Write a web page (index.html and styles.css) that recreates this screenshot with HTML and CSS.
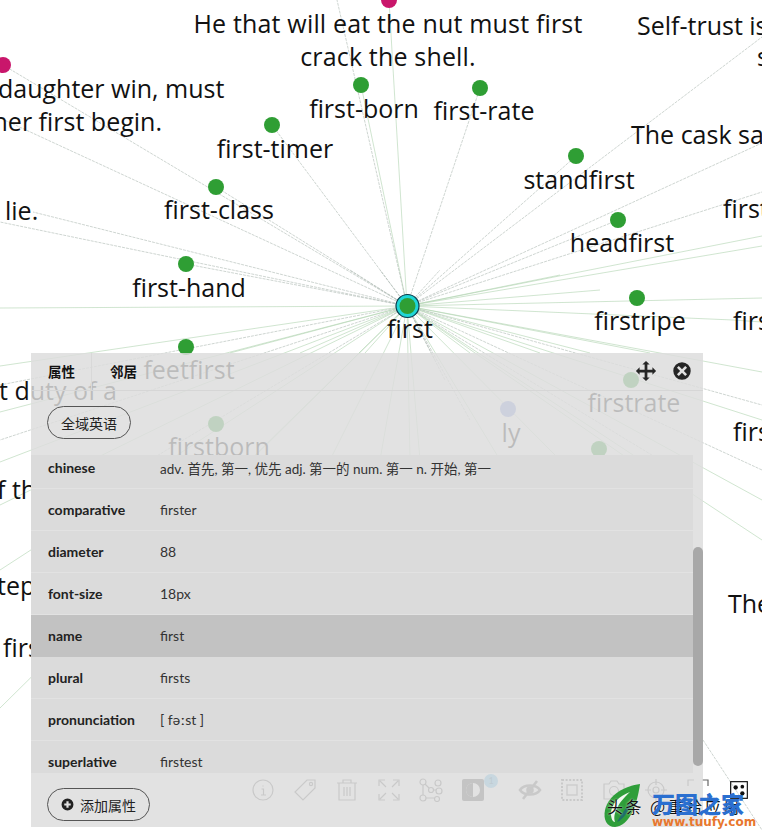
FILE: index.html
```html
<!DOCTYPE html>
<html lang="zh">
<head>
<meta charset="utf-8">
<title>first</title>
<link rel="stylesheet" href="styles.css">
</head>
<body>
<main class="stage">
  <svg class="graph" width="762" height="833" viewBox="0 0 762 833">
    <path class="edge edge-green" d="M407 306L0 308M407 306L0 366M407 306L0 412M407 306L0 462M407 306L0 505M407 306L0 570M407 306L0 708M407 306L361 85M407 306L389 0M407 306L762 298M407 306L762 236M407 306L762 246M407 306L733 320M733 320L762 322M407 306L762 372M407 306L762 420M407 306L762 500M407 306L762 540M407 306L410 460M407 306L420 460M407 306L380 460M407 306L330 460M407 306L250 460M407 306L500 460M407 306L560 460M407 306L630 460M407 306L590 353M407 306L650 353M407 306L540 353M407 306L300 353M407 306L230 353M407 306L470 353M407 306L365 353M407 306L600 290M407 306L560 275"/>
    <path class="edge edge-grey" d="M407 306L3 65M407 306L0 118M407 306L33 212M407 306L0 222M407 306L186 264M407 306L216 187M407 306L272 125M407 306L480 88M407 306L337 0M407 306L762 37M407 306L576 156M407 306L762 143M407 306L618 220M407 306L762 192M407 306L762 405M407 306L762 470M407 306L435 360M407 306L445 380M407 306L470 420M407 306L0 385M407 306L0 440M407 306L150 460M407 306L660 460M703 740L762 830M407 306L380 270M407 306L440 270M407 306L350 270"/>
    <circle class="node" cx="361" cy="85" r="8"/>
    <circle class="node" cx="480" cy="88" r="8"/>
    <circle class="node" cx="272" cy="125" r="8"/>
    <circle class="node" cx="216" cy="187" r="8"/>
    <circle class="node" cx="186" cy="264" r="8"/>
    <circle class="node" cx="576" cy="156" r="8"/>
    <circle class="node" cx="618" cy="220" r="8"/>
    <circle class="node" cx="637" cy="298" r="8"/>
    <circle class="node" cx="186" cy="347" r="8"/>
    <circle class="node" cx="216" cy="424" r="8"/>
    <circle class="node" cx="631" cy="380" r="8"/>
    <circle class="node" cx="599" cy="449" r="8"/>
    <circle class="node node-blue" cx="508" cy="409" r="8"/>
    <circle class="node node-pink" cx="3" cy="65" r="8"/>
    <circle class="node node-pink" cx="389" cy="0" r="8"/>
    <circle class="focus-ring" cx="407.500" cy="306" r="11.500"/>
    <circle class="node" cx="407.500" cy="306" r="8"/>

    <text class="label mid label-long" x="388" y="33">He that will eat the nut must first</text>
    <text class="label mid label-long" x="388" y="66">crack the shell.</text>
    <text class="label" x="-2" y="98">daughter win, must</text>
    <text class="label end" x="162" y="131">her first begin.</text>
    <text class="label" x="5" y="220">lie.</text>
    <text class="label mid" x="364" y="118">first-born</text>
    <text class="label mid" x="484" y="120">first-rate</text>
    <text class="label mid" x="275" y="158">first-timer</text>
    <text class="label mid" x="219" y="219">first-class</text>
    <text class="label mid" x="189" y="297">first-hand</text>
    <text class="label mid" x="579" y="189">standfirst</text>
    <text class="label mid" x="622" y="252">headfirst</text>
    <text class="label mid" x="640" y="330">firstripe</text>
    <text class="label mid" x="410" y="338">first</text>
    <text class="label" x="637" y="35">Self-trust is</text>
    <text class="label" x="757" y="66">s</text>
    <text class="label" x="631" y="144">The cask sa</text>
    <text class="label" x="723" y="218">first</text>
    <text class="label" x="733" y="330">firs</text>
    <text class="label" x="733" y="441">firs</text>
    <text class="label" x="728" y="613">The</text>
    <text class="label" x="-1" y="400">t duty of a</text>
    <text class="label" x="-3" y="499">f th</text>
    <text class="label" x="-3" y="595">tep</text>
    <text class="label" x="3" y="657">firs</text>
    <text class="label mid" x="189" y="379">feetfirst</text>
    <text class="label mid" x="219" y="456">firstborn</text>
    <text class="label mid" x="634" y="412">firstrate</text>
    <text class="label mid" x="511" y="442">ly</text>
  </svg>

  <nav class="toolbar">
    <svg class="tool" viewBox="0 0 24 24"><circle cx="12" cy="12" r="10"/><path d="M12 7.500v1M10.500 11H12.500V17M10 17H15"/></svg>
    <svg class="tool" viewBox="0 0 24 24"><path d="M14 2H22V10L10 22L2 14Z"/><circle cx="18" cy="6" r="1.600"/></svg>
    <svg class="tool" viewBox="0 0 24 24"><path d="M2 5H22M8 5V2H16V5M4 5V22H20V5M9 9V18M12 9V18M15 9V18"/></svg>
    <svg class="tool" viewBox="0 0 24 24"><path d="M2 8V2H8M16 2H22V8M22 16V22H16M8 22H2V16M3 3L9 9M21 3L15 9M21 21L15 15M3 21L9 15"/></svg>
    <svg class="tool" viewBox="0 0 24 24"><circle cx="4" cy="4" r="3"/><circle cx="19" cy="5" r="3"/><circle cx="12" cy="12" r="2.500"/><circle cx="20" cy="13" r="3"/><circle cx="4" cy="20" r="3"/><circle cx="18" cy="21" r="2.500"/><path d="M6 6L10 10M7 20H15M4 7V17M14 12H17"/></svg>
    <div class="tool-badged">
      <svg class="tool" viewBox="0 0 24 24"><rect class="solid" x="1" y="1" width="22" height="22" rx="2"/><circle class="hole" cx="12" cy="12" r="7"/><path class="solid" d="M12 5A7 7 0 0 0 12 19Z"/></svg>
      <span class="badge">1</span>
    </div>
    <svg class="tool tool-heavy" viewBox="0 0 24 24"><path d="M2 12C6 6 18 6 22 12C18 18 6 18 2 12ZM19 3L5 21"/><circle cx="12" cy="12" r="2.500"/></svg>
    <svg class="tool tool-dotted" viewBox="0 0 24 24"><path d="M2 2H22V22H2Z"/><rect class="plain" x="7" y="7" width="10" height="10"/></svg>
    <svg class="tool" viewBox="0 0 24 24"><path d="M2 6H7L9 3H15L17 6H22V21H2Z"/><circle cx="12" cy="13" r="4.500"/></svg>
    <svg class="tool" viewBox="0 0 24 24"><circle cx="12" cy="12" r="8"/><circle cx="12" cy="12" r="3"/><path d="M12 1V7M12 17V23M1 12H7M17 12H23"/></svg>
    <svg class="tool" viewBox="0 0 24 24"><path d="M2 8V2H8M16 2H22V8M22 16V22H16M8 22H2V16"/></svg>
    <svg class="tool tool-qr" viewBox="0 0 24 24"><rect class="plain" x="2" y="2" width="20" height="20"/><circle class="dot" cx="8" cy="9" r="2.600"/><circle class="dot" cx="16" cy="8" r="2.200"/><circle class="dot" cx="16" cy="16" r="2.600"/></svg>
  </nav>

  <section class="panel">
    <header class="panel-tabs">
      <span class="tab">属性</span>
      <span class="tab tab-next">邻居</span>
      <div class="panel-actions">
        <svg class="action" viewBox="0 0 24 24"><path d="M12 1L16 5H13.500V10.500H19V8L23 12L19 16V13.500H13.500V19H16L12 23L8 19H10.500V13.500H5V16L1 12L5 8V10.500H10.500V5H8Z"/></svg>
        <svg class="action" viewBox="0 0 24 24"><path fill-rule="evenodd" d="M12 2.500A9.500 9.500 0 1 0 12 21.500A9.500 9.500 0 1 0 12 2.500ZM8.500 6.500L12 10L15.500 6.500L17.500 8.500L14 12L17.500 15.500L15.500 17.500L12 14L8.500 17.500L6.500 15.500L10 12L6.500 8.500Z"/></svg>
      </div>
    </header>
    <div class="panel-label-row"><button class="pill">全域英语</button></div>
    <div class="panel-body">
      <div class="rows">
        <div class="row"><span class="key">chinese</span><span class="val val-long">adv. 首先, 第一, 优先 adj. 第一的 num. 第一 n. 开始, 第一</span></div>
        <div class="row"><span class="key">comparative</span><span class="val">firster</span></div>
        <div class="row"><span class="key">diameter</span><span class="val">88</span></div>
        <div class="row"><span class="key">font-size</span><span class="val">18px</span></div>
        <div class="row row-active"><span class="key">name</span><span class="val">first</span></div>
        <div class="row"><span class="key">plural</span><span class="val">firsts</span></div>
        <div class="row"><span class="key">pronunciation</span><span class="val">[ fəːst ]</span></div>
        <div class="row"><span class="key">superlative</span><span class="val">firstest</span></div>
      </div>
      <div class="scroll-track"><div class="scroll-thumb"></div></div>
    </div>
    <footer class="panel-foot">
      <button class="pill pill-add">
        <svg class="plus" viewBox="0 0 24 24"><path fill-rule="evenodd" d="M12 1A11 11 0 1 0 12 23A11 11 0 1 0 12 1ZM10 6H14V10H18V14H14V18H10V14H6V10H10Z"/></svg>
        添加属性
      </button>
    </footer>
  </section>

  <aside class="watermark">
    <svg class="wm-leaf" viewBox="0 0 38 44"><path class="leaf-green" d="M37 0C22 2 6 10 2 26C0 36 4 43 12 43C26 42 34 22 37 0Z"/><path class="leaf-white" d="M27 8C16 12 8 20 8 30C8 35 10 38 12 38C9 28 18 16 27 8Z"/><path class="leaf-teal" d="M14 38C20 36 27 26 30 14C25 22 18 30 14 38Z"/></svg>
    <span class="wm-under">头条 @重拾应用</span>
    <div class="wm-text">
      <strong class="wm-name">万图之家</strong>
      <span class="wm-url">www.tuufy.com</span>
    </div>
  </aside>
</main>
</body>
</html>
```
FILE: styles.css
```css
* { box-sizing: border-box; }
html, body { margin: 0; padding: 0; background: #fff; }
.stage { position: relative; width: 762px; height: 833px; overflow: hidden; background: #fff; }
.graph { position: absolute; left: 0; top: 0; display: block; }
.edge { fill: none; stroke-width: .6; }
.edge-green { stroke: #b0d4b0; }
.edge-grey { stroke: #adb9b1; stroke-dasharray: 3 1; }
.node { fill: #2f9e34; }
.node-blue { fill: #7f93e0; }
.node-pink { fill: #c9166b; }
.focus-ring { fill: #1fd6d6; stroke: #0c3a4a; stroke-width: 1.2; }
.label { font-family: "Open Sans", sans-serif; font-size: 25px; fill: #111; }
.label-long { letter-spacing: .17px; }
.mid { text-anchor: middle; }
.end { text-anchor: end; }

.toolbar { position: absolute; left: 251px; top: 778px; display: flex; gap: 18px; }
.tool { display: block; width: 24px; height: 24px; fill: none; stroke: #666; stroke-width: 1.2; }
.tool-heavy { stroke-width: 2.6; }
.tool-dotted path { stroke-dasharray: 2 1.6; stroke-width: 2; }
.tool-badged { position: relative; width: 24px; height: 24px; margin-right: 15px; }
.solid { fill: #444; stroke: none; }
.hole { fill: #fff; stroke: none; }
.plain { stroke: #777; stroke-width: 1.4; fill: none; }
.tool-qr { width: 20px; height: 20px; margin: 2px 0 0 1px; stroke: #111; }
.tool-qr .plain { stroke: #111; }
.dot { fill: #111; stroke: none; }
.badge { position: absolute; left: 23px; top: -4px; width: 14px; height: 14px; border-radius: 50%; background: #5cb8e8; color: #2a6f95; font: 9px/14px Lato, sans-serif; text-align: center; }

.panel { position: absolute; left: 31px; top: 353px; width: 672px; height: 474px; display: flex; flex-direction: column; background: rgba(220, 220, 220, .84); font-family: Lato, "Noto Sans CJK SC", sans-serif; font-size: 14px; color: #2a2a2a; }
.panel-tabs { height: 38px; flex: none; display: flex; align-items: flex-start; padding: 0 0 0 17px; border-bottom: 1px solid #d6d6d6; position: relative; }
.tab { font-weight: 700; font-size: 13.500px; color: #111; font-family: "Noto Sans CJK SC", sans-serif; padding-right: 16px; height: 37px; line-height: 37px; border-right: 1px solid #d8d8d8; }
.tab-next { padding-left: 18px; border-right: 0; }
.panel-actions { position: absolute; right: 10px; top: 7px; display: flex; gap: 14px; align-items: center; }
.action { width: 22px; height: 22px; fill: #262626; display: block; }
.panel-label-row { height: 64px; flex: none; padding: 15px 0 0 16px; }
.pill { display: inline-flex; align-items: center; height: 33px; padding: 0 13px; border: 1px solid #555; border-radius: 17px; background: transparent; font-family: "Noto Sans CJK SC", sans-serif; font-size: 14px; color: #222; }
.panel-body { flex: none; height: 318px; display: flex; overflow: hidden; }
.rows { width: 662px; flex: none; margin-top: -8px; overflow: hidden; }
.row { height: 42px; display: flex; align-items: center; padding-left: 17px; background: #dbdbdb; border-bottom: 1px solid #e2e2e2; }
.row-active { background: #c2c2c2; border-bottom-color: #c2c2c2; }
.key { width: 112px; flex: none; font-weight: 700; color: #222; }
.val { color: #333; font-family: Lato, "Noto Sans CJK SC", sans-serif; white-space: nowrap; }
.val-long { font-size: 13.500px; }
.scroll-track { flex: 1; padding-top: 92px; }
.scroll-thumb { height: 219px; border-radius: 5px; background: #a8a8a8; }
.panel-foot { flex: 1; padding: 15px 0 0 16px; }
.pill-add { padding: 0 13px; gap: 6px; }
.plus { width: 13px; height: 13px; fill: #222; }

.watermark { position: absolute; left: 603px; top: 783px; width: 159px; height: 50px; }
.wm-under { position: absolute; left: 4px; top: 13px; font: 16px/20px "Noto Sans CJK SC", sans-serif; letter-spacing: 2.500px; color: #111; white-space: nowrap; text-shadow: 0 0 2px #fff; }
.wm-leaf { position: absolute; left: 0; top: 1px; width: 38px; height: 44px; }
.leaf-green { fill: #2f9e3a; }
.leaf-white { fill: #f2f8f0; }
.leaf-teal { fill: #1f6f6a; }
.wm-text { position: absolute; left: 49px; top: 9px; display: flex; flex-direction: column; }
.wm-name { font: 900 23px/23px "Noto Sans CJK SC", sans-serif; color: #2a6fd0; white-space: nowrap; }
.wm-url { font: 700 12px/14px "DejaVu Sans", sans-serif; color: #e8772e; white-space: nowrap; }
```
